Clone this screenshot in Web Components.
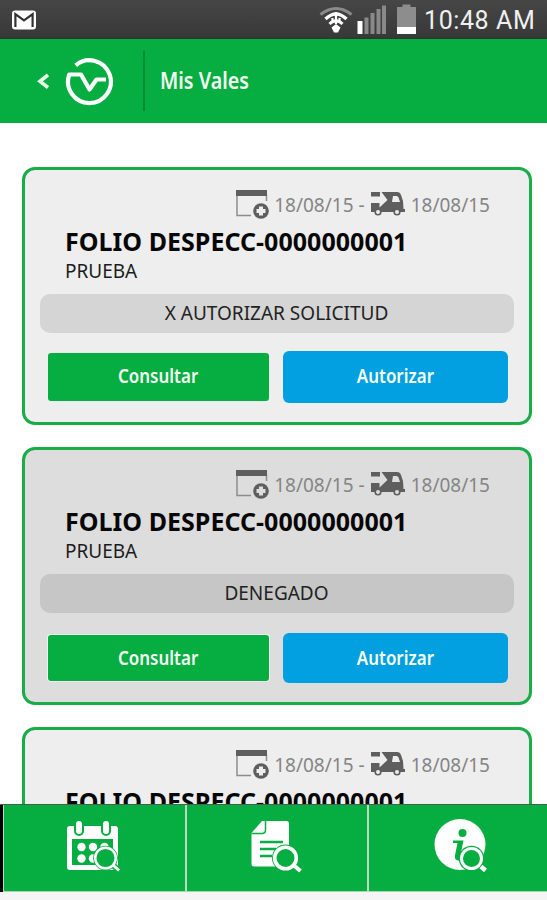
<!DOCTYPE html>
<html lang="es">
<head>
<meta charset="utf-8">
<title>Mis Vales</title>
<style>
  body {
    margin: 0;
    font-family: "Noto Sans", "Open Sans", sans-serif;
    background: #fff;
  }
</style>
</head>
<body>
<vales-app>
  <barra-estado slot="estado">10:48 AM</barra-estado>
  <barra-titulo slot="titulo">Mis Vales</barra-titulo>

  <tarjeta-vale alta="18/08/15" entrega="18/08/15" folio="FOLIO DESPECC-0000000001" nombre="PRUEBA">X AUTORIZAR SOLICITUD</tarjeta-vale>
  <tarjeta-vale denegado alta="18/08/15" entrega="18/08/15" folio="FOLIO DESPECC-0000000001" nombre="PRUEBA">DENEGADO</tarjeta-vale>
  <tarjeta-vale alta="18/08/15" entrega="18/08/15" folio="FOLIO DESPECC-0000000001"></tarjeta-vale>

  <barra-menu slot="menu"></barra-menu>
</vales-app>

<script>
class ValesApp extends HTMLElement {
  constructor() {
    super();
    this.attachShadow({ mode: 'open' });
  }

  connectedCallback() {
    this.shadowRoot.innerHTML = `

      <style>

        :host {
          display: flex;
          flex-direction: column;
          height: 900px;
          overflow: hidden;
        }

        main {
          flex: 1;
          min-height: 0;
          overflow: hidden;
          display: flex;
          flex-direction: column;
          gap: 22px;
          padding: 44px 15px 0 22px;
        }

      </style>

      <slot name="estado"></slot>
      <slot name="titulo"></slot>
      <main><slot></slot></main>
      <slot name="menu"></slot>

    `;
  }
}

class BarraEstado extends HTMLElement {
  constructor() {
    super();
    this.attachShadow({ mode: 'open' });
  }

  connectedCallback() {
    this.shadowRoot.innerHTML = `

      <style>

        :host {
          display: flex;
          flex: none;
          align-items: center;
          box-sizing: border-box;
          height: 39px;
          padding: 0 12px;
          color: #f0f0f0;
          font: 25px/39px Roboto, sans-serif;
          letter-spacing: 0.6px;
          background: linear-gradient(#464646, #393939 92%, #2b3a2e);
        }

        svg { display: block; flex: none; }
        .iconos { margin-left: auto; }
        .hora { margin-left: 8px; width: 111px; white-space: nowrap; padding-top: 2px; }

      </style>

      <svg width="24" height="20" viewBox="0 0 24 20">
        <rect x="0" y="0.5" width="24" height="19" rx="3" fill="#fff"/>
        <path d="M3.4 17V4.2L12 10.3l8.6-6.1V17" fill="none" stroke="#333" stroke-width="2.2"/>
      </svg>

      <svg class="iconos" width="98" height="39" viewBox="0 0 98 39">
        <path d="M2.500 14.500Q18 2.500 33.500 14.500" fill="none" stroke="#8a8a8a" stroke-width="3"/>
        <path d="M7.500 19Q18 9 28.500 19" fill="none" stroke="#fff" stroke-width="3.4"/>
        <path d="M11.500 24Q18 17.500 24.500 24" fill="none" stroke="#fff" stroke-width="3"/>
        <path d="M18 12v12M14.500 18v5M21.500 18v5" stroke="#fff" stroke-width="2.200"/>
        <path d="M13.500 27.500L18 24l4.500 3.500L20 32.500h-4z" fill="#fff"/>
        <path d="M39.500 21h5v13h-5z" fill="#fff"/>
        <path d="M46.500 17.500h4v16.500h-4zM52.500 13h4v21h-4zM58.500 9h4v25h-4zM64 5.500h4v28.500h-4z" fill="#898989"/>
        <path d="M79 7h5.500V4.500h8V7H98v20H79z" fill="#8d8d8d"/>
        <path d="M79 27h19v7H79z" fill="#fff"/>
      </svg>

      <span class="hora"><slot></slot></span>

    `;
  }
}

class BarraTitulo extends HTMLElement {
  constructor() {
    super();
    this.attachShadow({ mode: 'open' });
  }

  connectedCallback() {
    this.shadowRoot.innerHTML = `

      <style>

        :host {
          display: flex;
          flex: none;
          align-items: center;
          height: 84px;
          color: #f3fbf2;
          background: #06ad41;
        }

        .volver { margin-left: 37px; }
        .logo { margin-left: 16px; }
        .linea { width: 2px; height: 60px; margin: 0 15px 0 29px; background: #078a31; }

        h1 {
          margin: 0 0 1px;
          font-size: 22.5px;
          font-weight: 600;
          line-height: 30px;
          transform: scaleX(0.875);
          transform-origin: left;
        }

      </style>

      <svg class="volver" width="12" height="18" viewBox="0 0 12 18">
        <path d="M11 3L3 9.300l8 6.200" fill="none" stroke="#e9fbe9" stroke-width="3.600"/>
      </svg>
      <svg class="logo" width="49" height="49" viewBox="0 0 49 49">
        <path d="M10.700 8.300A21.400 21.400 0 1 1 4.300 17.500H16L24.500 32.500 31.500 22.500H41" fill="none" stroke="#fff" stroke-width="4.200" stroke-linejoin="round"/>
      </svg>
      <div class="linea"></div>
      <h1><slot></slot></h1>

    `;
  }
}

class TarjetaVale extends HTMLElement {
  constructor() {
    super();
    this.attachShadow({ mode: 'open' });
  }

  connectedCallback() {
    this.shadowRoot.innerHTML = `

      <style>

        :host {
          display: block;
          flex: none;
          box-sizing: border-box;
          height: 258px;
          padding: 19px 15px 0 15px;
          border: 3px solid #18ad46;
          border-radius: 13px;
          background: var(--fondo);
          --fondo: #eee;
          --estado: #d5d5d5;
        }

        :host([denegado]) {
          --fondo: #ddd;
          --estado: #c6c6c6;
        }

        .fechas {
          display: flex;
          align-items: center;
          justify-content: flex-end;
          height: 32px;
          margin-right: 24px;
          color: #858585;
          font-size: 19px;
        }

        .fechas svg { flex: none; display: block; margin-bottom: 2px; }
        .alta { margin-left: 5px; }
        .guion { margin: 0 6px 0 5px; }
        .entrega { margin-left: 6px; }

        h2 {
          margin: 3px 0 0 25px;
          color: #070707;
          font-size: 25px;
          line-height: 34px;
          letter-spacing: 0.03px;
          white-space: nowrap;
        }

        p {
          margin: 1px 0 0 25px;
          color: #1c1c1c;
          font-size: 19px;
          line-height: 24px;
        }

        .estado {
          height: 39px;
          margin-top: 11px;
          border-radius: 10px;
          background: var(--estado);
          color: #222;
          font-size: 19px;
          line-height: 39px;
          text-align: center;
          text-indent: -1px;
        }

        .botones {
          display: grid;
          grid-template-columns: 221px 225px;
          gap: 14px;
          align-items: center;
          margin: 18px 0 0 8px;
          height: 52px;
        }

        button {
          height: 48px;
          padding: 0 0 3px;
          border: 0;
          border-radius: 3px;
          color: #f5fff5;
          background: #06ad41;
          font: 600 19.5px/44px "Noto Sans", sans-serif;
        }

        button span {
          display: inline-block;
          transform: scaleX(0.87);
        }

        button.azul {
          height: 52px;
          border-radius: 6px;
          background: #029fe1;
        }

        :host([denegado]) .botones { margin-top: 19px; }
        :host([denegado]) button { height: 46px; padding-bottom: 1px; box-shadow: 0 0 0 1px #f0f5f0; }
        :host([denegado]) button.azul { height: 50px; box-shadow: none; }

      </style>

      <div class="fechas">
        <svg width="33" height="29" viewBox="0 0 33 29">
          <path d="M1 5v20.500H15M30.500 5v6" fill="none" stroke="#8d8d8d" stroke-width="1.500"/>
          <path d="M0 0h31v6H0z" fill="#5e5e5e"/>
          <circle cx="25" cy="21" r="7.800" fill="#5e5e5e"/>
          <path d="M25 16.500v9M20.500 21h9" stroke="var(--fondo)" stroke-width="4"/>
        </svg>
        <span class="alta"></span>
        <span class="guion">-</span>
        <svg width="34" height="25" viewBox="0 0 34 25">
          <path d="M0 0h9v4.500H0zM10.500 0h15.500q3 0 4 3l2 6 .5 8h1.500v3H0V11h8.500v4.500l8-7.500z" fill="#5e5e5e"/>
          <path d="M22 4h3.500q1.500 0 2 1.500l1.500 4.500H21z" fill="var(--fondo)"/>
          <circle cx="7" cy="20" r="2.800" fill="var(--fondo)" stroke="#5e5e5e" stroke-width="1.600"/>
          <circle cx="26" cy="20" r="2.800" fill="var(--fondo)" stroke="#5e5e5e" stroke-width="1.600"/>
        </svg>
        <span class="entrega"></span>
      </div>
      <h2></h2>
      <p></p>

    `;

    this.shadowRoot.querySelector('.alta').textContent = this.getAttribute('alta');
    this.shadowRoot.querySelector('.entrega').textContent = this.getAttribute('entrega');
    this.shadowRoot.querySelector('h2').textContent = this.getAttribute('folio');
    this.shadowRoot.querySelector('p').textContent = this.getAttribute('nombre');

    // sin nombre no hay acciones
    if (this.hasAttribute('nombre')) {
      this.mostrarAcciones();
    }
  }

  mostrarAcciones() {
    this.shadowRoot.querySelector('p').insertAdjacentHTML('afterend', `

      <div class="estado"><slot></slot></div>
      <div class="botones">
        <button id="consultar"><span>Consultar</span></button>
        <button id="autorizar" class="azul"><span>Autorizar</span></button>
      </div>

    `);
  }
}

class BarraMenu extends HTMLElement {
  constructor() {
    super();
    this.attachShadow({ mode: 'open' });
  }

  connectedCallback() {
    this.shadowRoot.innerHTML = `

      <style>

        :host {
          display: grid;
          grid-template-columns: 182px 182px 1fr;
          flex: none;
          box-sizing: border-box;
          height: 96px;
          padding: 0 0 8px 3px;
          border-top: 1px solid #43614a;
          background: linear-gradient(90deg, #000 3px, transparent 3px) 0 0 / 100% 87px no-repeat #f5f5f5;
        }

        div {
          box-sizing: border-box;
          border-left: 2px solid #b9dcbd;
          border-bottom: 1px solid #a5d8ae;
          background: #06ad41;
          padding: 14px 0 0 61px;
        }

        div:first-of-type { border-left-width: 1px; padding-left: 62px; }
        div:last-of-type { padding-left: 65px; }
        svg { display: block; }

      </style>

      <div>
        <svg width="56" height="54" viewBox="0 0 56 54">
          <rect x="1" y="7" width="51" height="44" rx="3" fill="#fff"/>
          <path d="M6 20h41v26H6z" fill="#06ad41"/>
          <path d="M13 5v7M40 5v7" stroke="#06ad41" stroke-width="10" stroke-linecap="round"/>
          <path d="M13 5v7M40 5v7" stroke="#fff" stroke-width="6" stroke-linecap="round"/>
          <g fill="#fff">
            <circle cx="15.500" cy="28" r="4.200"/>
            <circle cx="27" cy="28" r="4.200"/>
            <circle cx="38.500" cy="28" r="4.200"/>
            <circle cx="15.500" cy="39.500" r="4.200"/>
            <circle cx="27" cy="39.500" r="4.200"/>
          </g>
          <circle cx="39.500" cy="39" r="12.300" fill="#06ad41"/>
          <path d="M47 46l6 6" stroke="#06ad41" stroke-width="6"/>
          <circle cx="39.500" cy="39" r="10.300" fill="none" stroke="#fff" stroke-width="2.500"/>
          <path d="M47.500 46.500l5.500 5" stroke="#fff" stroke-width="3"/>
        </svg>
      </div>
      <div>
        <svg width="56" height="54" viewBox="0 0 56 54">
          <path d="M14 2h24.500q2.500 0 2.500 2.500V45q0 2.500-2.500 2.500H6Q3.500 47.500 3.500 45V14z" fill="#fff"/>
          <path d="M17.500 2v9q0 3.500-3.500 3.500H3.500" fill="none" stroke="#06ad41" stroke-width="1.500"/>
          <path d="M12 23h23M12 30h16M12 37h12" stroke="#06ad41" stroke-width="2.500"/>
          <circle cx="37.500" cy="39" r="13.500" fill="#06ad41"/>
          <circle cx="37.500" cy="39" r="10.800" fill="none" stroke="#fff" stroke-width="3.600"/>
          <path d="M46 46.500l6.500 5.500" stroke="#fff" stroke-width="4"/>
        </svg>
      </div>
      <div>
        <svg width="56" height="54" viewBox="0 0 56 54">
          <circle cx="26" cy="25.500" r="25.500" fill="#fff"/>
          <circle cx="28.500" cy="14" r="4" fill="#06ad41"/>
          <path d="M19 21.500H29.500L26 38q0 2 3 1.500l-2 2q-7 1-6-5L23.500 24H19z" fill="#06ad41"/>
          <circle cx="37.500" cy="39.500" r="12.800" fill="#06ad41"/>
          <circle cx="37.500" cy="39.500" r="11.500" fill="#fff"/>
          <circle cx="37.500" cy="39.500" r="8.500" fill="#06ad41"/>
          <path d="M47 47.500l4.500 4" stroke="#fff" stroke-width="4.500"/>
        </svg>
      </div>

    `;
  }
}

customElements.define('vales-app', ValesApp);
customElements.define('barra-estado', BarraEstado);
customElements.define('barra-titulo', BarraTitulo);
customElements.define('tarjeta-vale', TarjetaVale);
customElements.define('barra-menu', BarraMenu);
</script>
</body>
</html>
